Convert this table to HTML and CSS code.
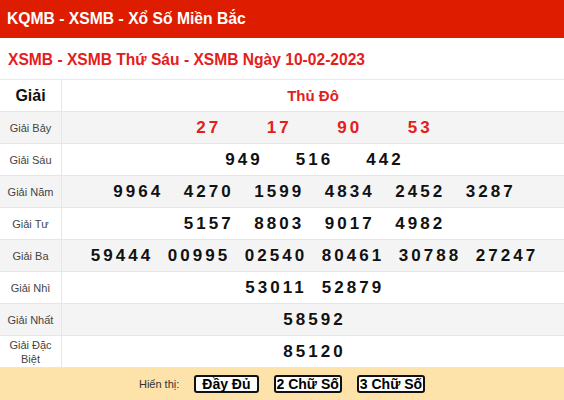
FILE: index.html
```html
<!DOCTYPE html>
<html lang="vi">
<head>
<meta charset="utf-8">
<link rel="stylesheet" href="styles.css">
</head>
<body>
<div class="page">
  <h1 class="title">KQMB - XSMB - Xổ Số Miền Bắc</h1>
  <h2 class="subtitle">XSMB - XSMB Thứ Sáu - XSMB Ngày 10-02-2023</h2>
  <table class="results">
    <tr class="head">
      <th class="label">Giải</th>
      <th class="region">Thủ Đô</th>
    </tr>
    <tr class="alt">
      <td class="label">Giải Bảy</td>
      <td><div class="nums w70 red"><span>27</span><span>17</span><span>90</span><span>53</span></div></td>
    </tr>
    <tr>
      <td class="label">Giải Sáu</td>
      <td><div class="nums w70"><span>949</span><span>516</span><span>442</span></div></td>
    </tr>
    <tr class="alt">
      <td class="label">Giải Năm</td>
      <td><div class="nums w70"><span>9964</span><span>4270</span><span>1599</span><span>4834</span><span>2452</span><span>3287</span></div></td>
    </tr>
    <tr>
      <td class="label">Giải Tư</td>
      <td><div class="nums w70"><span>5157</span><span>8803</span><span>9017</span><span>4982</span></div></td>
    </tr>
    <tr class="alt">
      <td class="label">Giải Ba</td>
      <td><div class="nums w77"><span>59444</span><span>00995</span><span>02540</span><span>80461</span><span>30788</span><span>27247</span></div></td>
    </tr>
    <tr>
      <td class="label">Giải Nhì</td>
      <td><div class="nums w77"><span>53011</span><span>52879</span></div></td>
    </tr>
    <tr class="alt">
      <td class="label">Giải Nhất</td>
      <td><div class="nums w77"><span>58592</span></div></td>
    </tr>
    <tr>
      <td class="label">Giải Đặc<br>Biệt</td>
      <td><div class="nums w77"><span>85120</span></div></td>
    </tr>
  </table>
  <div class="footer">
    <span class="show">Hiển thị:</span>
    <button class="btn btn-full" type="button">Đầy Đủ</button>
    <button class="btn" type="button">2 Chữ Số</button>
    <button class="btn" type="button">3 Chữ Số</button>
  </div>
</div>
</body>
</html>
```
FILE: styles.css
```css
html, body {
  margin: 0;
  padding: 0;
  background: #fff;
}
.page {
  width: 564px;
  height: 400px;
  overflow: hidden;
  font-family: "Liberation Sans", Arial, sans-serif;
}
.title {
  margin: 0;
  height: 38px;
  background: #dd1c00;
  color: #fff;
  font-size: 15.7px;
  font-weight: bold;
  line-height: 38px;
  padding-left: 7px;
}
.subtitle {
  margin: 0;
  height: 42px;
  color: #e3201b;
  font-size: 15.6px;
  font-weight: bold;
  line-height: 44px;
  padding-left: 8px;
  border-bottom: 1px solid #fde6c0;
  box-sizing: border-box;
}
.results {
  width: 100%;
  border-collapse: collapse;
  table-layout: fixed;
}
.results td, .results th {
  border: 1px solid #fde3b6;
  height: 31px;
  padding: 0;
  text-align: center;
  vertical-align: middle;
}
.results tr:first-child th {
  border-top: none;
}
.results tr > :first-child {
  border-left: none;
}
.results tr > :last-child {
  border-right: none;
}
.results .label {
  width: 61px;
  font-size: 11px;
  font-weight: normal;
  color: #444;
  line-height: 14px;
}
.head th {
  font-weight: bold;
  font-size: 15px;
}
.head th.label {
  font-size: 16px;
  font-weight: bold;
  color: #111;
}
.head .region {
  color: #e3201b;
}
.alt td {
  background: #f4f4f4;
}
.nums {
  display: flex;
  justify-content: center;
  font-size: 17px;
  font-weight: bold;
  color: #111;
  letter-spacing: 3px;
}
.nums span {
  box-sizing: border-box;
  text-align: center;
  padding-left: 3px;
}
.w70 span {
  width: 70.5px;
}
.w77 span {
  width: 77px;
}
.red {
  color: #e3201b;
}
.footer {
  height: 32px;
  background: #fde2aa;
  display: flex;
  align-items: center;
  justify-content: center;
  gap: 15px;
}
.show {
  font-size: 11px;
  color: #333;
}
.btn {
  font-family: "Liberation Sans", Arial, sans-serif;
  font-size: 14px;
  font-weight: bold;
  color: #000;
  background: #fff;
  border: 2px solid #111;
  border-radius: 3px;
  height: 18px;
  line-height: 14px;
  padding: 0 1px;
  margin: 0;
}
.btn-full {
  padding: 0 6px;
}
```
